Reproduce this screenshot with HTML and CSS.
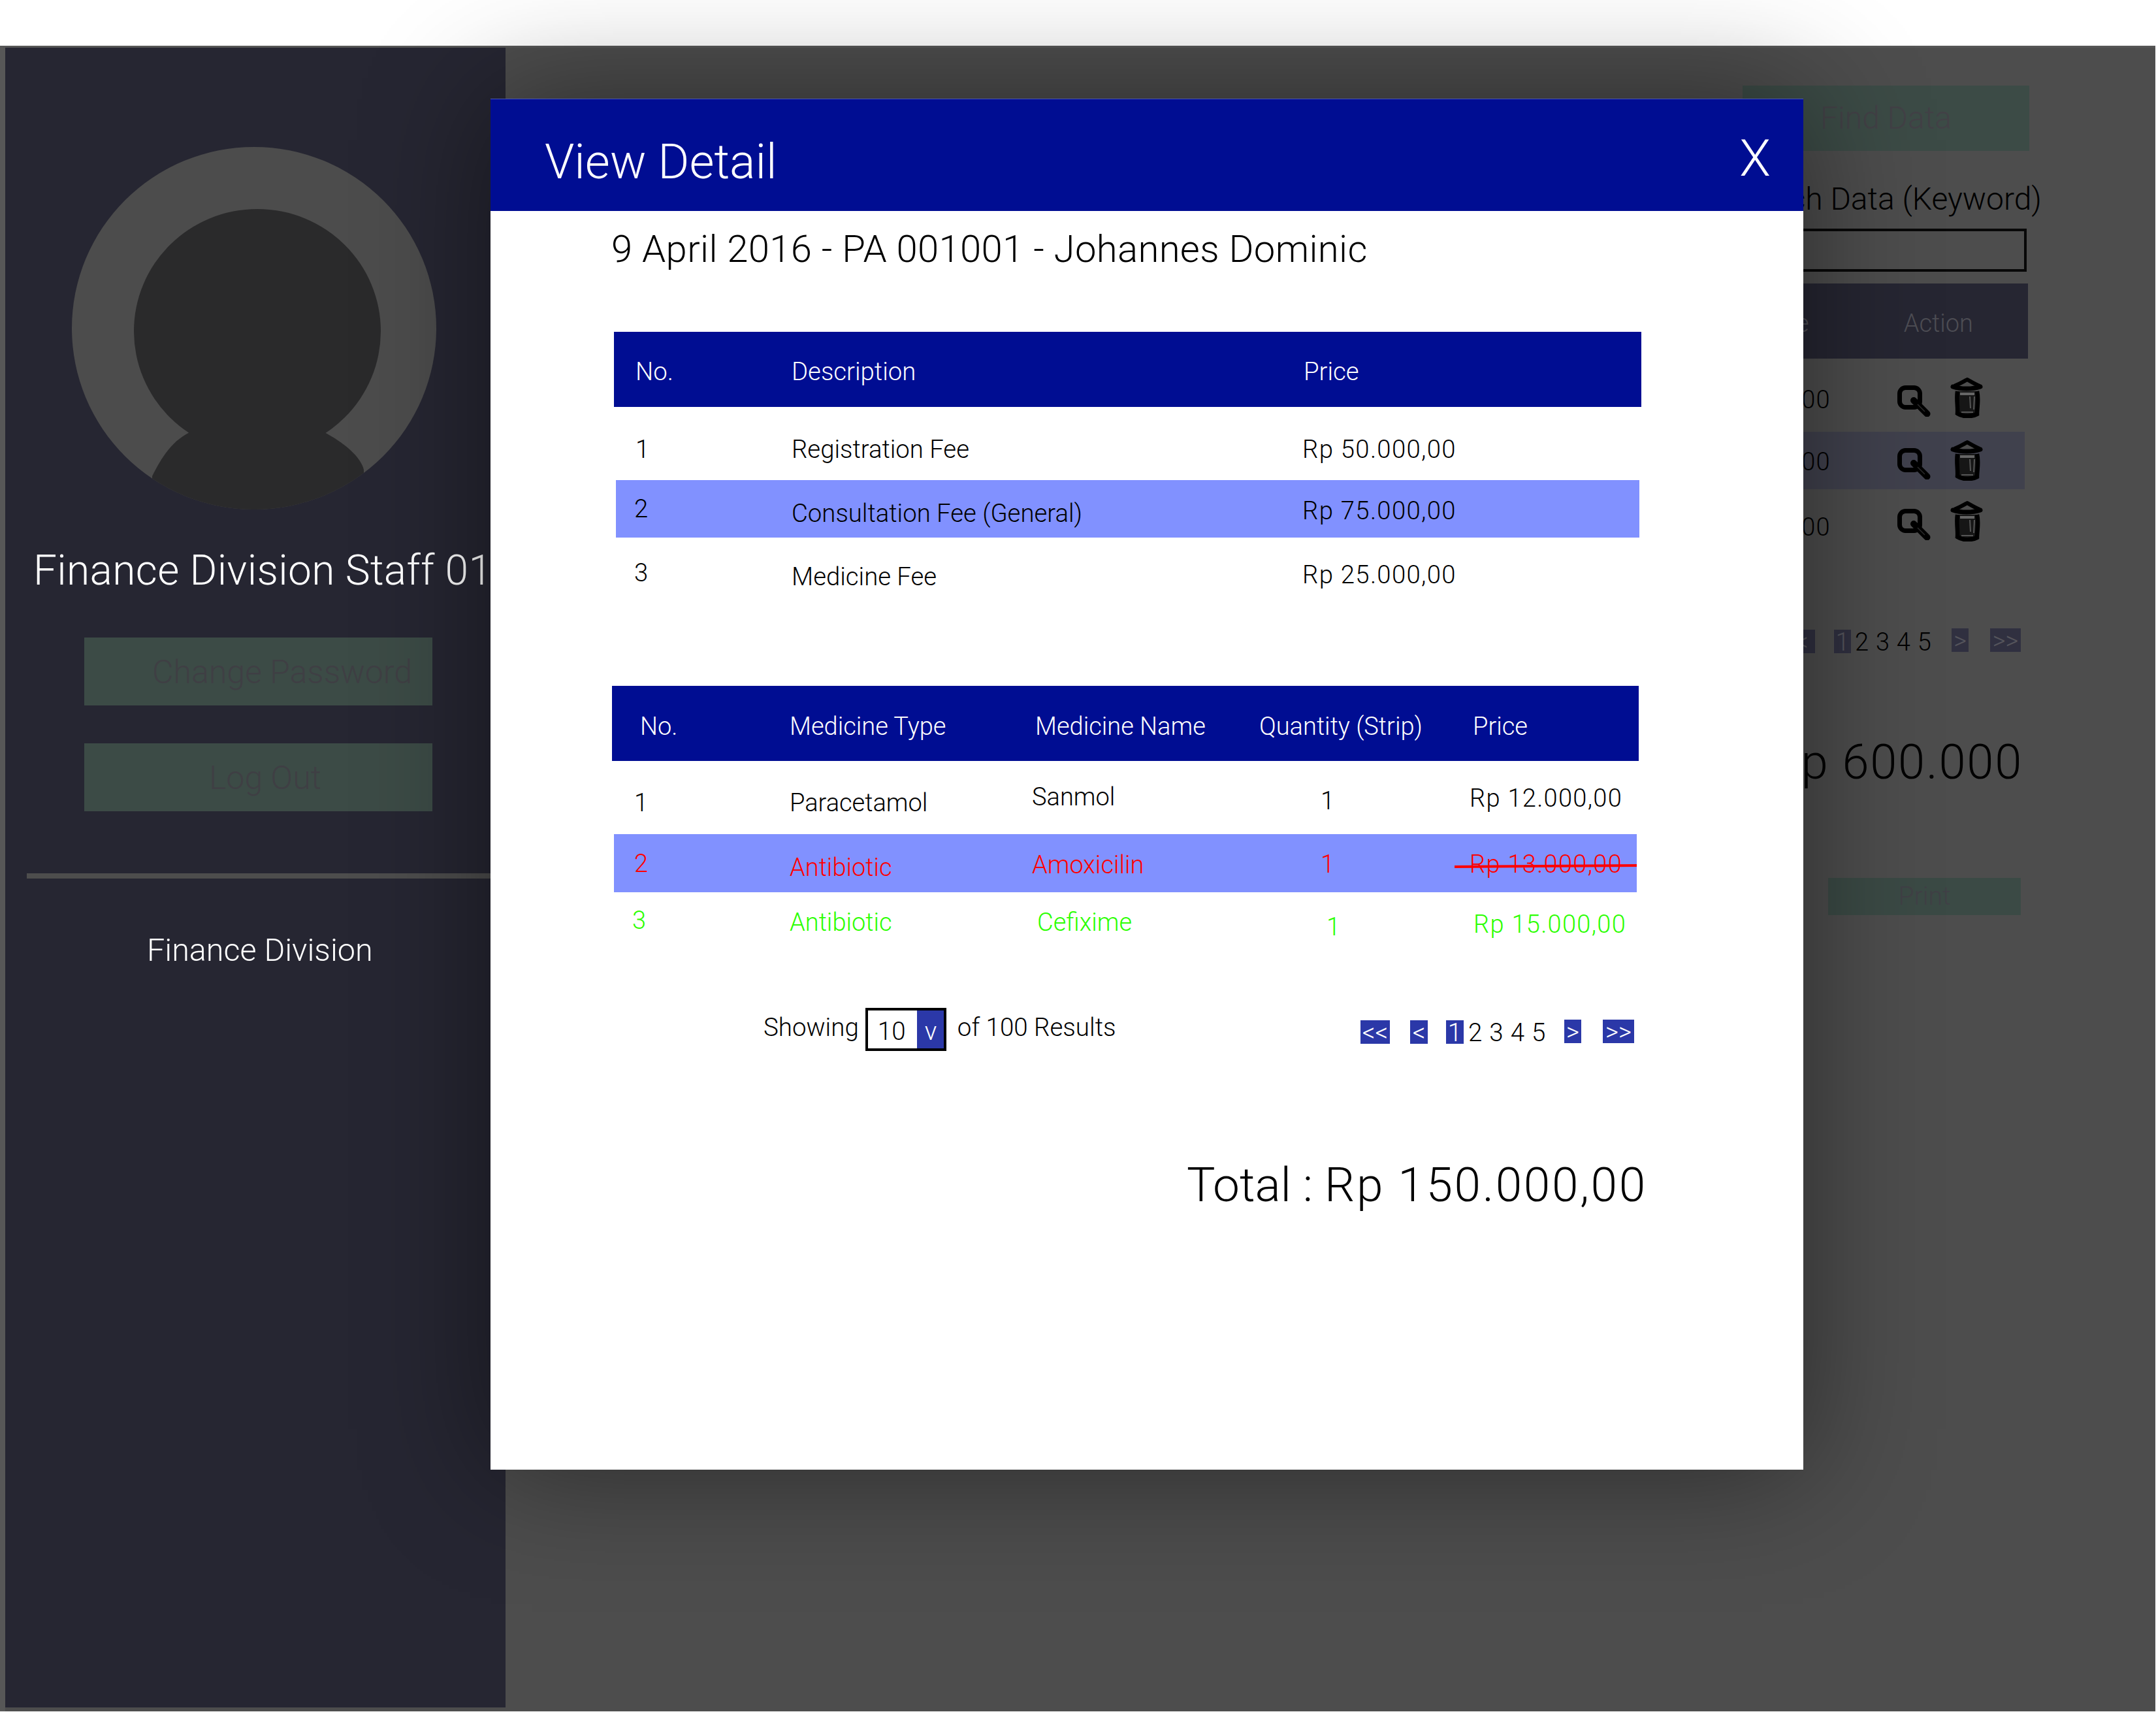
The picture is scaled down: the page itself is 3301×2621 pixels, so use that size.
FILE: index.html
```html
<!DOCTYPE html>
<html lang="en">

<head>
    <meta charset="UTF-8">
    <title>Finance Division</title>
    <link rel="stylesheet" href="styles.css">
</head>

<body>
    <svg class="defs" width="0" height="0">
        <symbol id="icon-find" viewBox="0 0 51 48">
            <rect x="3.5" y="3.5" width="31" height="30" rx="9" fill="none" stroke="#000" stroke-width="7" />
            <path d="M25 23L45.5 43.5" fill="none" stroke="#000" stroke-width="10" stroke-linecap="round" />
            <path d="M31 29L42 40" fill="none" stroke="#2c2c2c" stroke-width="1.5" />
        </symbol>
        <symbol id="icon-trash" viewBox="0 0 50 63">
            <path d="M6 14C14 11 19 8 26 4C33 8 38 11 45 14" fill="#4d4d4d" stroke="#000" stroke-width="6" stroke-linejoin="round" />
            <path d="M4 15C16 19 34 19 46 15" fill="none" stroke="#000" stroke-width="7" stroke-linecap="round" />
            <path d="M11 22C9 34 12 46 11 56C20 62 33 61 41 57C41 46 44 34 41 22" fill="#161616" stroke="#000" stroke-width="6.5" />
            <path d="M15 26H37" fill="none" stroke="#666" stroke-width="4" />
            <path d="M30 30L31 48M37 30L36 50" fill="none" stroke="#555" stroke-width="2" />
            <path d="M17 54H35" fill="none" stroke="#555" stroke-width="2" />
        </symbol>
    </svg>

    <div class="screen">
        <!-- left column -->
        <aside class="sidebar">
            <svg class="avatar" width="558" height="555" viewBox="0 0 558 555">
                <defs>
                    <clipPath id="avatar-clip">
                        <ellipse cx="279" cy="277.5" rx="279" ry="277.5" />
                    </clipPath>
                </defs>
                <ellipse cx="279" cy="277.5" rx="279" ry="277.5" fill="#4c4c4c" />
                <g clip-path="url(#avatar-clip)" fill="#2a2a2b">
                    <ellipse cx="284" cy="282" rx="189" ry="187" />
                    <path d="M123 504C140 470 155 450 180 437L387 437C420 455 442 475 447 494L447 560L123 560Z" />
                </g>
            </svg>
            <div class="staff-name">Finance Division Staff 01</div>
            <div class="side-btn side-btn-pass">Change Password</div>
            <div class="side-btn side-btn-out">Log Out</div>
            <div class="side-line"></div>
            <div class="side-menu">Finance Division</div>
        </aside>

        <!-- dimmed page behind the popup -->
        <main class="main">
            <div class="find-btn">Find Data</div>
            <div class="search-label">Search Data (Keyword)</div>
            <div class="search-input"></div>
            <div class="bg-head">
                <span class="bg-price">Price</span>
                <span class="bg-action">Action</span>
            </div>
            <div class="bg-row bg-row-1">
                <span class="bg-value money">Rp 200.000</span>
                <svg class="ic-find" width="51" height="48"><use href="#icon-find" /></svg>
                <svg class="ic-trash" width="50" height="63"><use href="#icon-trash" /></svg>
            </div>
            <div class="bg-row bg-row-2">
                <span class="bg-value money">Rp 200.000</span>
                <svg class="ic-find" width="51" height="48"><use href="#icon-find" /></svg>
                <svg class="ic-trash" width="50" height="63"><use href="#icon-trash" /></svg>
            </div>
            <div class="bg-row bg-row-3">
                <span class="bg-value bg-value-low money">Rp 200.000</span>
                <svg class="ic-find" width="51" height="48"><use href="#icon-find" /></svg>
                <svg class="ic-trash" width="50" height="63"><use href="#icon-trash" /></svg>
            </div>
            <ul class="bg-pager">
                <li class="bg-pg">&lt;</li>
                <li class="bg-pg bg-pg-one">1</li>
                <li class="bg-nums">2 3 4 5</li>
                <li class="bg-pg bg-pg-next">&gt;</li>
                <li class="bg-pg bg-pg-last">&gt;&gt;</li>
            </ul>
            <div class="bg-total">Total : Rp 600.000</div>
            <div class="print-btn">Print</div>
        </main>
    </div>

    <!-- popup -->
    <div class="modal">
        <div class="modal-head">
            <div class="modal-title">View Detail</div>
            <div class="modal-close">X</div>
        </div>
        <div class="modal-sub">9 April 2016 - PA 001001 - Johannes Dominic</div>

        <div class="fee-table">
            <div class="fee-row fee-head">
                <div class="fee-no">No.</div>
                <div>Description</div>
                <div class="fee-price-head">Price</div>
            </div>
            <div class="fee-row fee-r1">
                <div class="fee-no">1</div>
                <div>Registration Fee</div>
                <div class="money">Rp 50.000,00</div>
            </div>
            <div class="fee-row fee-r2 band">
                <div class="fee-no">2</div>
                <div class="dn-7">Consultation Fee (General)</div>
                <div class="dn-3 money">Rp 75.000,00</div>
            </div>
            <div class="fee-row fee-r3">
                <div class="fee-no">3</div>
                <div class="dn-6">Medicine Fee</div>
                <div class="dn-3 money">Rp 25.000,00</div>
            </div>
        </div>

        <div class="med-table">
            <div class="med-row med-head">
                <div class="med-no-head">No.</div>
                <div>Medicine Type</div>
                <div class="med-name-head">Medicine Name</div>
                <div>Quantity (Strip)</div>
                <div class="med-price-head">Price</div>
            </div>
            <div class="med-row med-r1">
                <div class="med-no dn-9">1</div>
                <div class="dn-9">Paracetamol</div>
                <div>Sanmol</div>
                <div class="med-qty dn-6">1</div>
                <div class="dn-2 money">Rp 12.000,00</div>
            </div>
            <div class="med-row med-r2 band txt-red">
                <div class="med-no">2</div>
                <div class="dn-6">Antibiotic</div>
                <div class="dn-2">Amoxicilin</div>
                <div class="med-qty dn-1">1</div>
                <div class="dn-1 money">Rp 13.000,00</div>
                <div class="strike"></div>
            </div>
            <div class="med-row med-r3 txt-green">
                <div class="med-no">3</div>
                <div class="dn-3">Antibiotic</div>
                <div class="med-name-c dn-3">Cefixime</div>
                <div class="med-qty med-qty-c dn-10">1</div>
                <div class="med-price-c dn-6 money">Rp 15.000,00</div>
            </div>
        </div>

        <div class="list-foot">
            <div class="showing">
                <span>Showing</span>
                <div class="select-box">
                    <span class="select-val">10</span>
                    <span class="select-arrow">v</span>
                </div>
                <span>of 100 Results</span>
            </div>
            <ul class="pager">
                <li class="pg pg-wide">&lt;&lt;</li>
                <li class="pg pg-prev">&lt;</li>
                <li class="pg pg-one">1</li>
                <li class="pg-nums">2 3 4 5</li>
                <li class="pg pg-next">&gt;</li>
                <li class="pg pg-wide pg-last">&gt;&gt;</li>
            </ul>
        </div>

        <div class="modal-total">Total : <span class="total-val">Rp 150.000,00</span></div>
    </div>
</body>

</html>
```

FILE: styles.css
```css
* {
    margin: 0;
    padding: 0;
    box-sizing: border-box;
}

ul {
    list-style: none;
}

html,
body {
    width: 3301px;
    height: 2621px;
    overflow: hidden;
}

body {
    position: relative;
    background: #fff;
    color: #000;
    font-family: Roboto, "Liberation Sans", sans-serif;
    font-weight: 300;
    line-height: 1;
    white-space: nowrap;
}

.defs {
    position: absolute;
}

/* digits are wider in the design font */
.money {
    letter-spacing: 1.3px;
}

.screen {
    display: flex;
    width: 3300px;
    height: 2550px;
    margin-top: 70px;
    background: #4d4d4d;
    border-top: 3px solid #565656;
    border-left: 8px solid #575757;
}

/* sidebar */
.sidebar {
    width: 766px;
    height: 2541px;
    background: #262632;
    display: flex;
    flex-direction: column;
    align-items: flex-start;
    flex-shrink: 0;
}

.avatar {
    display: block;
    margin: 152px 0 0 102px;
}

.staff-name {
    margin: 62px 0 0 43px;
    font-size: 64px;
    letter-spacing: 0.35px;
    color: #fff;
}

.side-btn {
    width: 533px;
    height: 104px;
    margin-left: 121px;
    background: #3c4b46;
    color: #3f3f44;
    font-size: 50px;
    padding-top: 28px;
}

.side-btn-pass {
    margin-top: 70px;
    padding-left: 104px;
}

.side-btn-out {
    margin-top: 58px;
    padding-left: 191px;
}

.side-line {
    width: 733px;
    height: 8px;
    margin: 95px 0 0 33px;
    background: #4d4d4d;
}

.side-menu {
    margin: 86px 0 0 217px;
    font-size: 48.5px;
    color: #fff;
}

/* page behind popup */
.main {
    flex: 1;
    display: flex;
    flex-direction: column;
    align-items: flex-end;
    padding-right: 176px;
}

.find-btn {
    width: 439px;
    height: 100px;
    margin: 58px 17px 0 0;
    background: #3c4b46;
    color: #424146;
    font-size: 48px;
    text-align: center;
    line-height: 100px;
}

.search-label {
    margin: 50px -2px 0 0;
    font-size: 48px;
}

.search-input {
    width: 1100px;
    height: 66px;
    margin: 21px 21px 0 0;
    border: 4px solid #080808;
}

.bg-head {
    display: flex;
    justify-content: flex-end;
    width: 1100px;
    height: 115px;
    margin: 18px 19px 0 0;
    padding: 42px 84px 0 0;
    background: #262632;
    color: #4d4d54;
    font-size: 38px;
}

.bg-action {
    margin-left: 145px;
}

.bg-row {
    display: flex;
    justify-content: flex-end;
    align-items: flex-start;
    width: 1095px;
    padding-right: 64px;
    margin-right: 24px;
}

.bg-row-1 {
    height: 112px;
    padding-top: 28px;
}

.bg-row-1 .bg-value {
    margin-top: 16px;
}

.bg-row-2 {
    height: 88px;
    padding-top: 12px;
    background: #40414d;
}

.bg-row-3 {
    height: 100px;
    padding-top: 17px;
}

.bg-value {
    margin-top: 15px;
    font-size: 38px;
}

.bg-value-low {
    margin-top: 22px;
}

.ic-find {
    margin: 13px 0 0 102px;
}

.ic-trash {
    margin-left: 30px;
}

.bg-pager {
    display: flex;
    align-items: flex-start;
    margin: 115px 30px 0 0;
}

.bg-pg {
    height: 36px;
    background: #303040;
    color: #55555c;
    font-size: 38px;
    text-align: center;
}

.bg-pg:first-child {
    width: 40px;
}

.bg-pg-one {
    width: 26px;
    margin-left: 29px;
}

.bg-nums {
    width: 120px;
    margin: 0 28px 0 6px;
    font-size: 38px;
    letter-spacing: 0.8px;
}

.bg-pg-next {
    width: 26px;
    margin-top: -2px;
}

.bg-pg-last {
    width: 47px;
    margin: -2px 0 0 33px;
}

.bg-total {
    margin: 128px 27px 0 0;
    font-size: 74px;
    letter-spacing: 1.8px;
}

.print-btn {
    width: 295px;
    height: 57px;
    margin: 140px 30px 0 0;
    background: #3b4a45;
    color: #404046;
    font-size: 39px;
    text-align: center;
    line-height: 57px;
}

/* popup */
.modal {
    position: absolute;
    left: 751px;
    top: 151px;
    width: 2010px;
    height: 2099px;
    background: #fff;
    box-shadow: 0 0 180px rgba(0, 0, 0, 0.45);
}

.modal-head {
    display: flex;
    justify-content: space-between;
    align-items: flex-start;
    height: 172px;
    padding: 60px 50px 0 83px;
    background: #000d92;
    border-top: 1px solid #4a55b0;
    color: #fff;
}

.modal-title {
    font-size: 73.5px;
}

.modal-close {
    margin-top: -8px;
    font-size: 78px;
}

.modal-sub {
    margin: 29px 0 0 185px;
    font-size: 58px;
    letter-spacing: 0.35px;
}

.fee-table {
    height: 542px;
    margin: 98px 0 0 189px;
    width: 1573px;
    font-size: 38.3px;
}

.fee-row {
    display: grid;
    grid-template-columns: 272px 782px 1fr;
    align-items: start;
}

.fee-no {
    padding-left: 33px;
}

.fee-head {
    height: 115px;
    padding-top: 42px;
    background: #000d92;
    color: #fff;
}

.fee-price-head {
    padding-left: 2px;
}

.fee-r1 {
    height: 112px;
    padding-top: 46px;
}

.band {
    margin: 0 3px;
    background: #8191ff;
}

.fee-r2 {
    grid-template-columns: 269px 782px 1fr;
    height: 88px;
    padding-top: 25px;
}

.fee-r2 .fee-no {
    padding-left: 28px;
}

.fee-r3 {
    padding-top: 35px;
}

.fee-r3 .fee-no {
    padding-left: 31px;
}

.med-table {
    width: 1572px;
    margin-left: 186px;
    font-size: 38px;
}

.med-row {
    display: grid;
    grid-template-columns: 272px 371px 348px 322px 1fr;
    align-items: start;
    position: relative;
}

.med-head {
    height: 115px;
    padding-top: 43px;
    background: #000d92;
    color: #fff;
}

.med-no-head {
    padding-left: 43px;
}

.med-name-head {
    padding-left: 5px;
}

.med-price-head {
    padding-left: 5px;
}

.med-no {
    padding-left: 34px;
}

.med-qty {
    padding-left: 94px;
}

.med-r1 {
    height: 112px;
    padding-top: 36px;
}

.med-r2 {
    grid-template-columns: 269px 371px 348px 322px 1fr;
    height: 89px;
    padding-top: 26px;
}

.med-r2 .med-no {
    padding-left: 31px;
}

.med-r3 {
    padding-top: 24px;
}

.med-r3 .med-no {
    padding-left: 31px;
}

.med-name-c {
    padding-left: 8px;
}

.med-qty-c {
    padding-left: 103px;
}

.med-price-c {
    padding-left: 6px;
}

.txt-red {
    color: #f00;
}

.txt-green {
    color: #2bff00;
}

.strike {
    position: absolute;
    left: 1287px;
    right: 0;
    top: 47px;
    height: 4px;
    background: #f00;
    transform: rotate(-0.4deg);
}

.dn-1 {
    margin-top: 1px;
}

.dn-2 {
    margin-top: 2px;
}

.dn-3 {
    margin-top: 3px;
}

.dn-6 {
    margin-top: 6px;
}

.dn-7 {
    margin-top: 7px;
}

.dn-9 {
    margin-top: 9px;
}

.dn-10 {
    margin-top: 10px;
}

.list-foot {
    display: flex;
    justify-content: space-between;
    align-items: flex-start;
    width: 1333px;
    margin: 105px 0 0 418px;
    font-size: 38.5px;
}

.showing {
    display: flex;
    align-items: flex-start;
}

.showing > span {
    padding-top: 11px;
}

.select-box {
    display: flex;
    width: 124px;
    height: 66px;
    margin: 0 17px 0 10px;
    border: 4px solid #000;
}

.select-val {
    width: 75px;
    padding: 13px 0 0 15px;
}

.select-arrow {
    flex: 1;
    padding: 13px 0 0 12px;
    background: #2b38a8;
    color: #fff;
}

.pager {
    display: flex;
    align-items: flex-start;
    margin-top: 19px;
}

.pg {
    height: 36px;
    background: #2b38a8;
    color: #fff;
    text-align: center;
}

.pg-wide {
    width: 45px;
}

.pg-prev {
    width: 27px;
    margin-left: 31px;
}

.pg-one {
    width: 27px;
    margin-left: 28px;
}

.pg-nums {
    width: 119px;
    margin: 0 28px 0 7px;
    letter-spacing: 0.8px;
}

.pg-next {
    width: 26px;
    margin-top: -1px;
}

.pg-last {
    width: 48px;
    margin: -1px 0 0 33px;
}

.modal-total {
    margin: 169px 0 0 1066px;
    font-size: 73px;
}

.total-val {
    letter-spacing: 2.6px;
}
```
